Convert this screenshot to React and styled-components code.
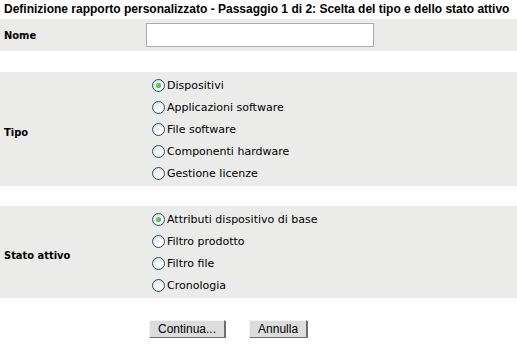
import React from "react";
import styled, { createGlobalStyle } from "styled-components";

const Global = createGlobalStyle`
  html, body { margin: 0; padding: 0; background: #fff; }
  body { font-family: "DejaVu Sans", "Liberation Sans", sans-serif; font-size: 11px; color: #000; }
`;

const Page = styled.div`
  width: 517px;
  display: flex;
  flex-direction: column;
`;

const Title = styled.div`
  height: 19px;
  padding: 2px 0 0 4px;
  box-sizing: border-box;
  font-family: "Liberation Sans", sans-serif;
  font-weight: bold;
  font-size: 12px;
  line-height: 14px;
  white-space: nowrap;
`;

const Band = styled.div`
  display: grid;
  grid-template-columns: 146px 1fr;
  align-items: center;
  background: #ebebe9;
  height: ${(p) => p.$h}px;
  margin-top: ${(p) => p.$mt || 0}px;
  box-sizing: border-box;
  padding-top: ${(p) => p.$pt || 0}px;
`;

const Label = styled.div`
  padding-left: 4px;
  font-weight: bold;
  font-family: "DejaVu Sans Condensed", "DejaVu Sans", sans-serif;
  font-size: 11px;
  align-self: center;
`;

const TextInput = styled.input`
  width: 228px;
  height: 24px;
  box-sizing: border-box;
  border: 1px solid #a5acb2;
  background: #fff;
  margin: 0;
  padding: 0 3px;
  outline: none;
`;

const RadioList = styled.div`
  display: flex;
  flex-direction: column;
  gap: 9px;
  padding-left: 6px;
  align-self: start;
`;

const RadioRow = styled.label`
  display: flex;
  align-items: center;
  height: 13px;
  font-family: "DejaVu Sans", sans-serif;
  font-size: 11px;
  line-height: 13px;
`;

const Circle = styled.span`
  width: 11px;
  height: 11px;
  border-radius: 50%;
  border: 1px solid #1c5180;
  background: radial-gradient(circle at 70% 70%, #fff 0%, #f2f2ee 50%, #dcdcd6 100%);
  display: flex;
  align-items: center;
  justify-content: center;
  margin-right: 2px;
  flex: none;
`;

const Dot = styled.span`
  width: 5px;
  height: 5px;
  border-radius: 50%;
  background: radial-gradient(circle at 40% 40%, #6be06b, #21a121);
`;

const Buttons = styled.div`
  display: flex;
  gap: 24px;
  padding: 22px 0 0 149px;
`;

const Button = styled.button`
  height: 18px;
  padding: 0 ${(p) => p.$px}px;
  font-family: "Liberation Sans", Arial, sans-serif;
  font-size: 12px;
  line-height: 14px;
  color: #000;
  background: #dcdcdc;
  border: 1px solid;
  border-color: #f4f4f4 #6e6e6e #6e6e6e #f4f4f4;
  box-shadow: 1px 1px 0 #6e6e6e;
  margin: 0;
`;

function Radio({ checked, children }) {
  return (
    <RadioRow>
      <Circle>{checked && <Dot />}</Circle>
      {children}
    </RadioRow>
  );
}

export default function App() {
  return (
    <Page>
      <Global />
      <Title>Definizione rapporto personalizzato - Passaggio 1 di 2: Scelta del tipo e dello stato attivo</Title>
      <Band $h={32}>
        <Label>Nome</Label>
        <div><TextInput defaultValue="" /></div>
      </Band>
      <Band $h={114} $mt={21} $pt={7}>
        <Label>Tipo</Label>
        <RadioList>
          <Radio checked>Dispositivi</Radio>
          <Radio>Applicazioni software</Radio>
          <Radio>File software</Radio>
          <Radio>Componenti hardware</Radio>
          <Radio>Gestione licenze</Radio>
        </RadioList>
      </Band>
      <Band $h={92} $mt={20} $pt={7}>
        <Label>Stato attivo</Label>
        <RadioList>
          <Radio checked>Attributi dispositivo di base</Radio>
          <Radio>Filtro prodotto</Radio>
          <Radio>Filtro file</Radio>
          <Radio>Cronologia</Radio>
        </RadioList>
      </Band>
      <Buttons>
        <Button $px={8}>Continua...</Button>
        <Button $px={8}>Annulla</Button>
      </Buttons>
    </Page>
  );
}
